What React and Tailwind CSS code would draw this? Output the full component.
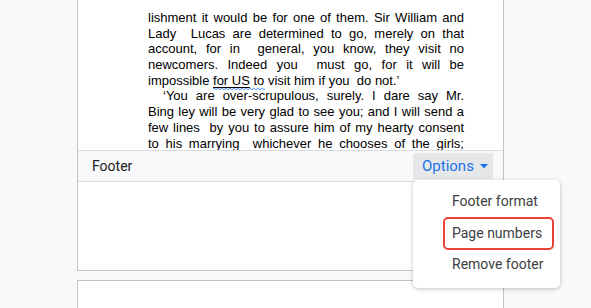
import React from 'react';

// justified lines of the document body, one per row so the breaks match
const lines = [
  "lishment it would be for one of them. Sir William and",
  "Lady  Lucas are determined to go, merely on that",
  "account, for in  general, you know, they visit no",
  "newcomers. Indeed you  must go, for it will be",
];

const lines2 = [
  "Bing ley will be very glad to see you; and I will send a",
  "few lines  by you to assure him of my hearty consent",
  "to his marrying  whichever he chooses of the girls;",
];

const Line = ({ children, className = '' }) => (
  <div className={`text-justify [text-align-last:justify] whitespace-pre-wrap h-[15.7px] ${className}`}>
    {children}
  </div>
);

const Wavy = () => (
  <svg className="absolute left-0 top-[14px]" width="53" height="4" viewBox="0 0 53 4">
    <path
      d="M0 2 Q1 0.5 2 2 T4 2 T6 2 T8 2 T10 2 T12 2 T14 2 T16 2 T18 2 T20 2 T22 2 T24 2 T26 2 T28 2 T30 2 T32 2 T34 2 T36 2 T38 2 T40 2 T42 2 T44 2 T46 2 T48 2 T50 2 T52 2"
      fill="none"
      stroke="#4285f4"
      strokeWidth="0.9"
    />
  </svg>
);

const menuItems = ["Footer format", "Page numbers", "Remove footer"];

export default function App() {
  return (
    <div className="w-[591px] h-[308px] bg-[#f8f9fa] overflow-hidden">
      <div className="ml-[77px] w-[427px]">
        {/* current page */}
        <div className="bg-white border-x border-b border-[#c4c4c4]">
          <div className="h-[150px] overflow-hidden pl-[70px] pr-[39px] pt-[10px] text-[13px] leading-[15.7px] text-black font-['Liberation_Sans',Arial,sans-serif]">
            {lines.map((l) => (
              <Line key={l}>{l}</Line>
            ))}
            <div className="whitespace-pre h-[15.7px]">
              {"impossible "}
              <span className="relative inline-block">
                <span className="underline underline-offset-[2px]">for US</span>
                {" to"}
                <Wavy />
              </span>
              {" visit him if you  do not.\u2019"}
            </div>
            <Line className="pl-[15px]">{"\u2018You are over-scrupulous, surely. I dare say Mr."}</Line>
            {lines2.map((l) => (
              <Line key={l}>{l}</Line>
            ))}
          </div>

          {/* footer bar */}
          <div className="h-[32px] bg-[#f8f9fa] border-y border-[#dadce0] flex items-center justify-between pl-[14px] pr-[10px] font-['Roboto',sans-serif]">
            <span className="text-[14px] text-[#202124]">Footer</span>
            <div className="relative">
              <div className="h-[26px] w-[80px] bg-[#e6e7e8] rounded-[2px] flex items-center pl-[9px] text-[15px] text-[#1a73e8]">
                Options
                <svg className="ml-[6px]" width="8" height="5" viewBox="0 0 8 5">
                  <path d="M0 0 L8 0 L4 4.5 Z" fill="#1a73e8" />
                </svg>
              </div>
              <div className="absolute left-0 top-[27px] w-[147px] h-[108px] bg-white rounded-[5px] shadow-[0_1px_4px_rgba(0,0,0,0.25)] pt-[6px] z-10">
                {menuItems.map((m, i) => (
                  <div key={m} className="h-[31.5px] flex items-center pl-[39px] text-[14px] text-[#3c4043] whitespace-nowrap">
                    {i === 1 ? (
                      <span className="shrink-0 border-2 border-[#ea4335] rounded-[5px] -ml-[9px] pl-[7px] h-[33px] w-[111px] flex items-center">
                        {m}
                      </span>
                    ) : (
                      m
                    )}
                  </div>
                ))}
              </div>
            </div>
          </div>

          <div className="h-[88px]" />
        </div>

        {/* next page */}
        <div className="mt-[9px] h-[40px] bg-white border border-[#c4c4c4]" />
      </div>
    </div>
  );
}
